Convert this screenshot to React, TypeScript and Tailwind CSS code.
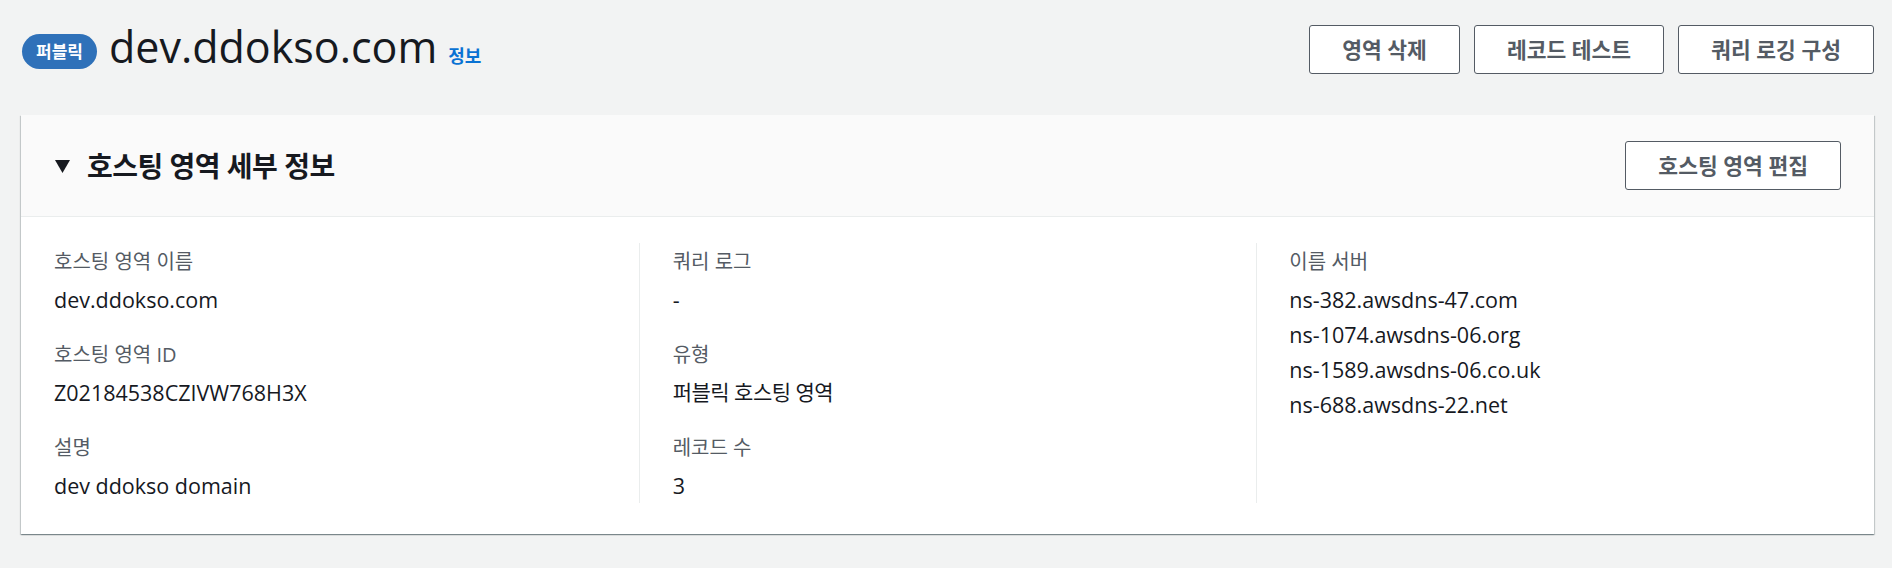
import React from "react";

function Btn({ children }: { children: React.ReactNode }) {
  return (
    <button className="flex h-[49px] items-center justify-center rounded-[3px] border-[1.5px] border-[#545b64] bg-white px-[32px] text-[21.5px] font-bold leading-none text-[#545b64]">
      {children}
    </button>
  );
}

function Label({ children }: { children: React.ReactNode }) {
  return <div className="text-[20px] leading-[38px] text-[#545b64]">{children}</div>;
}

function Value({ children, korean }: { children: React.ReactNode; korean?: boolean }) {
  return (
    <div
      className={
        korean
          ? "text-[21px] leading-[35px] tracking-[-0.5px] text-[#16191f]"
          : "text-[21.5px] leading-[35px] text-[#16191f]"
      }
    >
      {children}
    </div>
  );
}

function Pair({ label, children, first }: { label: string; children: React.ReactNode; first?: boolean }) {
  return (
    <div className={first ? "" : "mt-[19px]"}>
      <Label>{label}</Label>
      <div className="mt-[1px]">{children}</div>
    </div>
  );
}

export default function App() {
  return (
    <div className="min-h-[568px] bg-[#f2f3f3] pl-[21px] pr-[18px] pt-[25px] font-['Open_Sans','Noto_Sans_CJK_KR',sans-serif]">
      <div className="flex items-start justify-between">
        <div className="flex h-[49px] items-center">
          <span className="ml-[1px] mt-[4px] flex h-[35px] w-[75px] items-center justify-center rounded-full bg-[#2f71b9] text-[17px] font-bold leading-none text-white">
            퍼블릭
          </span>
          <h1 className="mb-[6px] ml-[12px] text-[43px] font-normal leading-[49px] text-[#16191f]">
            dev.ddokso.com
          </h1>
          <a className="ml-[11px] mt-[12px] text-[18px] font-bold leading-none text-[#0972d3]">정보</a>
        </div>
        <div className="flex gap-[14px]">
          <Btn>영역 삭제</Btn>
          <Btn>레코드 테스트</Btn>
          <Btn>쿼리 로깅 구성</Btn>
        </div>
      </div>

      <div className="mt-[41px] bg-white shadow-[0_1px_1px_0_rgba(0,28,36,0.3),1px_1px_1px_0_rgba(0,28,36,0.15),-1px_1px_1px_0_rgba(0,28,36,0.15)]">
        <div className="flex h-[102px] items-center justify-between border-b border-[#eaeded] bg-[#fafafa] pl-[34px] pr-[33px]">
          <div className="flex items-center">
            <svg width="15" height="13" viewBox="0 0 15 13" className="mt-[1px]">
              <path d="M0 0H15L7.5 13Z" fill="#16191f" />
            </svg>
            <h2 className="ml-[17px] text-[28px] font-bold leading-none tracking-[-0.5px] text-[#16191f]">
              호스팅 영역 세부 정보
            </h2>
          </div>
          <Btn>호스팅 영역 편집</Btn>
        </div>

        <div className="grid grid-cols-3 pb-[31px] pt-[26px]">
          <div className="pl-[33px]">
            <Pair label="호스팅 영역 이름" first>
              <Value>dev.ddokso.com</Value>
            </Pair>
            <Pair label="호스팅 영역 ID">
              <Value>Z02184538CZIVW768H3X</Value>
            </Pair>
            <Pair label="설명">
              <Value>dev ddokso domain</Value>
            </Pair>
          </div>
          <div className="border-l border-[#eaeded] pl-[33px]">
            <Pair label="쿼리 로그" first>
              <Value>-</Value>
            </Pair>
            <Pair label="유형">
              <Value korean>퍼블릭 호스팅 영역</Value>
            </Pair>
            <Pair label="레코드 수">
              <Value>3</Value>
            </Pair>
          </div>
          <div className="border-l border-[#eaeded] pl-[32px]">
            <Pair label="이름 서버" first>
              <Value>ns-382.awsdns-47.com</Value>
              <Value>ns-1074.awsdns-06.org</Value>
              <Value>ns-1589.awsdns-06.co.uk</Value>
              <Value>ns-688.awsdns-22.net</Value>
            </Pair>
          </div>
        </div>
      </div>
    </div>
  );
}
